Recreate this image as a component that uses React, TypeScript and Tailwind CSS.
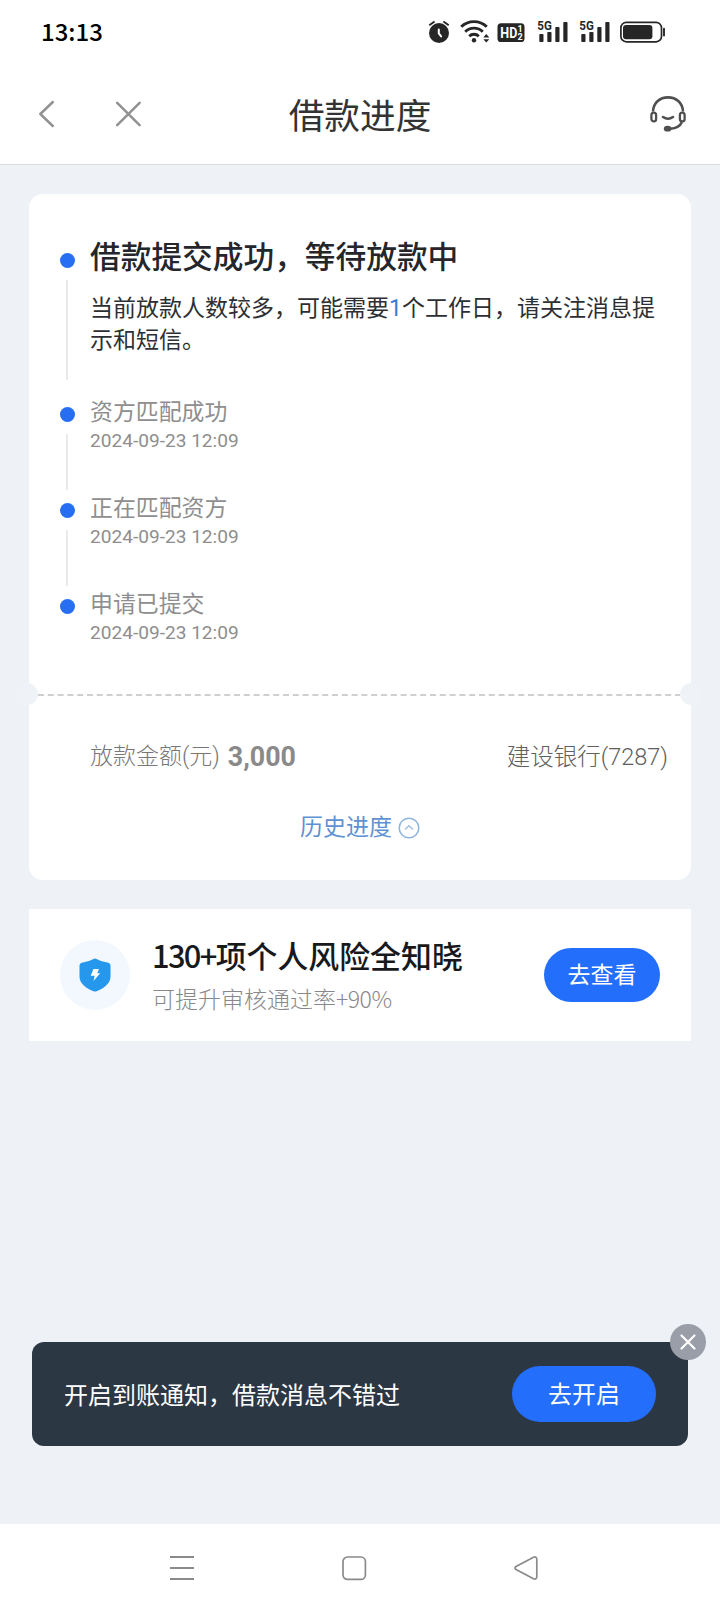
import React from "react";

type Step = { title: string; time: string; last?: boolean };

const steps: Step[] = [
  { title: "资方匹配成功", time: "2024-09-23 12:09" },
  { title: "正在匹配资方", time: "2024-09-23 12:09" },
  { title: "申请已提交", time: "2024-09-23 12:09", last: true },
];

function Signal() {
  return (
    <svg className="overflow-visible" width="32" height="28" viewBox="0 -2 32 28" fill="#262626">
      <text x="0.3" y="10.4" fontSize="12" fontWeight="700" fontFamily="Roboto, sans-serif" textLength="14.5" lengthAdjust="spacingAndGlyphs">5G</text>
      <rect x="2.3" y="14" width="4.2" height="8" rx="0.8" />
      <rect x="10.3" y="12" width="4.2" height="10" rx="0.8" />
      <rect x="18.3" y="7" width="4.2" height="15" rx="0.8" />
      <rect x="26.3" y="2" width="4.2" height="20" rx="0.8" />
    </svg>
  );
}

function StatusBar() {
  return (
    <div className="flex h-16 items-center pl-[41px]">
      <span className="flex-1 pb-[2px] font-['Noto_Sans_CJK_SC',sans-serif] text-[24px] leading-[24px] font-medium text-black">13:13</span>
      <div className="flex w-[292px] items-center">
        <svg width="22" height="24" viewBox="0 0 22 24" fill="none">
          <circle cx="11" cy="13" r="10" fill="#262626" />
          <path d="M1.3 5.2 6.6 1.4M20.7 5.2l-5.3-3.8" stroke="#262626" strokeWidth="1.9" />
          <path d="M10.8 9.4v4l2.3 3" stroke="#fff" strokeWidth="2" strokeLinecap="round" strokeLinejoin="round" />
        </svg>
        <svg className="ml-[10px]" width="32" height="24" viewBox="0 0 32 24" fill="none">
          <path d="M1.200 6.800a18.500 18.500 0 0 1 25.600 0" stroke="#262626" strokeWidth="2.900" />
          <path d="M5.200 11.700a12.700 12.700 0 0 1 17.600 0" stroke="#262626" strokeWidth="2.900" />
          <path d="M9.200 16.200a7 7 0 0 1 9.600 0" stroke="#262626" strokeWidth="2.900" />
          <circle cx="14" cy="20.300" r="2.200" fill="#262626" />
          <path d="M23.300 17.400 26.300 14l3 3.400zM23.300 19.200l3 3.400 3-3.400z" fill="#262626" />
        </svg>
        <svg className="ml-[5px]" width="28" height="24" viewBox="0 0 28 24">
          <rect x="0.5" y="3.3" width="27" height="18.700" rx="3.600" fill="#262626" />
          <text x="3.300" y="17.800" fontSize="14.500" fontWeight="700" fill="#fff" fontFamily="Roboto, sans-serif" textLength="17" lengthAdjust="spacingAndGlyphs">HD</text>
          <text x="20.400" y="12" fontSize="9" fontWeight="700" fill="#fff" fontFamily="Roboto, sans-serif">1</text>
          <text x="20.400" y="20.200" fontSize="9" fontWeight="700" fill="#fff" fontFamily="Roboto, sans-serif">2</text>
        </svg>
        <div className="ml-[12px] flex gap-[10px]">
          <Signal />
          <Signal />
        </div>
        <svg className="ml-[9px]" width="46" height="24" viewBox="0 0 46 24" fill="none">
          <rect x="0.900" y="2.400" width="40.600" height="19.400" rx="5.400" stroke="#262626" strokeWidth="1.700" />
          <rect x="3" y="5" width="29.400" height="14.200" rx="3" fill="#262626" />
          <path d="M44 8.800v6.800" stroke="#262626" strokeWidth="1.900" strokeLinecap="round" />
        </svg>
      </div>
    </div>
  );
}

function TitleBar() {
  return (
    <div className="grid h-[100px] grid-cols-[1fr_auto_1fr] items-center px-[33px]">
      <div className="flex items-center gap-[60px] pl-[4px]">
        <svg width="18" height="30" viewBox="0 0 18 30" fill="none" stroke="#929292" strokeWidth="2.500" strokeLinecap="round" strokeLinejoin="round">
          <path d="M15.800 3 3.300 15l12.500 12" />
        </svg>
        <svg width="26" height="26" viewBox="0 0 26 26" fill="none" stroke="#929292" strokeWidth="2.500" strokeLinecap="round">
          <path d="m2.200 1.800 22.400 22.400M24.600 1.800 2.200 24.200" />
        </svg>
      </div>
      <h1 className="pt-[5px] text-[35.700px] leading-[40px] font-normal text-[#333]">借款进度</h1>
      <svg className="justify-self-end" width="38" height="38" viewBox="0 0 38 38" fill="none" stroke="#4f4f4f" strokeWidth="2.600">
        <path d="M4 16.500C4.500 7.500 11 2.400 19 2.400S33.500 7.500 34 16.500" />
        <rect x="2.400" y="17.600" width="4.700" height="8.800" rx="2.350" strokeWidth="2.300" />
        <rect x="30.900" y="17.600" width="4.700" height="8.800" rx="2.350" strokeWidth="2.300" />
        <path d="M14 22c3 2.100 7 2.100 10 0" strokeLinecap="round" />
        <path d="M33 27c-2 4.200-6 6.500-11.500 6.700" />
        <ellipse cx="18.600" cy="33.700" rx="3.800" ry="2.900" fill="#4f4f4f" stroke="none" />
      </svg>
    </div>
  );
}

function Dot() {
  return <div className="h-[15px] w-[15px] shrink-0 rounded-full bg-[#266ff3]" />;
}

function Timeline() {
  return (
    <div className="flex flex-col pt-[40px] pl-[31px]">
      <div className="flex h-[153px] gap-[15px]">
        <div className="flex w-[15px] flex-col items-center pt-[19px]">
          <Dot />
          <div className="mt-[12px] mr-px h-[100px] w-[2px] shrink-0 bg-[#e8eaec]" />
        </div>
        <div className="flex-1 pt-[2px]">
          <h2 className="h-[44px] text-[30.700px] leading-[44px] font-medium text-[#24262b]">借款提交成功，等待放款中</h2>
          <p className="mt-[13px] w-[580px] text-[23px] leading-[32px] text-[#2d2f33]">
            当前放款人数较多，可能需要<span className="text-[#3c7bd0]">1</span>个工作日，请关注消息提
            <br />
            示和短信。
          </p>
        </div>
      </div>
      {steps.map((step) => (
        <div key={step.title} className="flex h-[96px] gap-[15px]">
          <div className="flex w-[15px] flex-col items-center pt-[20px]">
            <Dot />
            {!step.last && <div className="mt-[12px] mr-px h-[56px] w-[2px] shrink-0 bg-[#e8eaec]" />}
          </div>
          <div className="pt-[10px] text-[#8e8e8e]">
            <div className="text-[22.900px] leading-[32px]">{step.title}</div>
            <div className="text-[19.100px] leading-[24px]">{step.time}</div>
          </div>
        </div>
      ))}
    </div>
  );
}

function ProgressCard() {
  return (
    <section className="relative h-[686px] rounded-[14px] bg-white">
      <div className="h-[499px]">
        <Timeline />
      </div>
      <svg className="block" width="662" height="4" viewBox="0 0 662 4">
        <path d="M9 2h642" stroke="#cdcfd0" strokeWidth="1.800" strokeDasharray="6 3.800" />
      </svg>
      <div className="absolute top-[489px] left-[-13px] h-[22px] w-[22px] rounded-full bg-[#eff2f7]" />
      <div className="absolute top-[489px] right-[-11px] h-[22px] w-[22px] rounded-full bg-[#eff2f7]" />
      <div className="flex items-center justify-between pt-[40px] pr-[23px] pl-[61px] text-[23px] leading-[40px] text-[#8a8a8a]">
        <div className="flex items-center font-light text-[#777]">
          <span>放款金额(元)</span>
          <span className="ml-[8px] text-[26.800px] font-bold text-[#8a8a8a]">3,000</span>
        </div>
        <span className="text-[23.500px] font-light text-[#606060]">建设银行(7287)</span>
      </div>
      <button className="mx-auto mt-[31px] flex items-center gap-[6px] text-[23px] leading-[40px] text-[#5e92d2]">
        <span>历史进度</span>
        <svg width="22" height="22" viewBox="0 0 22 22" fill="none">
          <circle cx="11" cy="11" r="9.800" stroke="#8fb4dc" strokeWidth="1.500" />
          <path d="m7 12.500 4-3.800 4 3.800" stroke="#a0bfe0" strokeWidth="1.500" />
        </svg>
      </button>
    </section>
  );
}

function RiskCard() {
  return (
    <section className="mt-[29px] flex h-[132px] items-center bg-white pr-[31px] pl-[31px]">
      <div className="flex h-[70px] w-[70px] shrink-0 items-center justify-center rounded-full bg-[#f3f7fe]">
        <svg width="32" height="34" viewBox="0 0 32 34">
          <path d="M14.500 1Q16 .2 17.500 1 22.500 4 29.300 4.800 31.500 5.200 31.500 7.500V18.500C31.500 26 24 31 17.500 33.300Q16 33.900 14.500 33.300C8 31 .5 26 .5 18.500V7.500Q.5 5.200 2.700 4.800 9.500 4 14.500 1z" fill="#2598ee" />
          <path d="M14.500 11h5.400l-1.700 4.200h3L14.500 23l1.200-5.200h-4z" fill="#fff" />
        </svg>
      </div>
      <div className="ml-[22px] flex-1 pt-[3px]">
        <div className="text-[30.900px] leading-[42px] font-medium text-[#17191c]">
          <span className="font-['Noto_Sans_CJK_SC',sans-serif] tracking-[-1.700px]">130+</span>项个人风险全知晓
        </div>
        <div className="text-[23px] leading-[38px] font-light text-[#88888c]">
          可提升审核通过率<span className="font-['Noto_Sans_CJK_SC',sans-serif] tracking-[-0.500px]">+90%</span>
        </div>
      </div>
      <button className="h-[54px] w-[116px] rounded-full bg-[#246efc] pt-px text-[23px] leading-[53px] text-white">去查看</button>
    </section>
  );
}

function NoticeBar() {
  return (
    <section className="relative mx-8 mb-[78px] flex h-[104px] items-center justify-between rounded-[12px] bg-[#2c3744] px-8">
      <p className="pt-[3px] text-[24px] leading-[40px] text-white">开启到账通知，借款消息不错过</p>
      <button className="h-[56px] w-[144px] rounded-full bg-[#246efc] pt-[3px] text-[24px] leading-[53px] text-white">去开启</button>
      <button aria-label="关闭" className="absolute -top-[18px] -right-[18px] flex h-9 w-9 items-center justify-center rounded-full bg-[#9a9ea8]">
        <svg width="18" height="18" viewBox="0 0 18 18" stroke="#fff" strokeWidth="2.200" strokeLinecap="round">
          <path d="m2.500 2.500 13 13M15.500 2.500l-13 13" />
        </svg>
      </button>
    </section>
  );
}

function SystemNav() {
  return (
    <nav className="flex h-[88px] items-center justify-between bg-white pr-[181px] pl-[169px]">
      <svg width="26" height="26" viewBox="0 0 26 26" stroke="#8a8a8a" strokeWidth="2">
        <path d="M1 2h24M1 13h24M1 24h24" />
      </svg>
      <svg width="26" height="26" viewBox="0 0 26 26" fill="none" stroke="#8a8a8a" strokeWidth="1.700">
        <rect x="2" y="2" width="22.400" height="22.400" rx="4.500" />
      </svg>
      <svg width="26" height="26" viewBox="0 0 26 26" fill="none" stroke="#8a8a8a" strokeWidth="1.700" strokeLinejoin="round">
        <path d="M3 11.500 20.500 2.200Q23.500 1.200 23.800 4V22Q23.500 24.800 20.500 23.800L3 14.500Q1 13 3 11.500z" />
      </svg>
    </nav>
  );
}

export default function App() {
  return (
    <div className="flex h-[1612px] w-[720px] flex-col bg-[#eef2f7] font-['Roboto','Noto_Sans_CJK_SC',sans-serif]">
      <header className="h-[165px] border-b border-[#d9dbdd] bg-white">
        <StatusBar />
        <TitleBar />
      </header>
      <main className="flex-1 px-[29px] pt-[29px]">
        <ProgressCard />
        <RiskCard />
      </main>
      <NoticeBar />
      <SystemNav />
    </div>
  );
}
